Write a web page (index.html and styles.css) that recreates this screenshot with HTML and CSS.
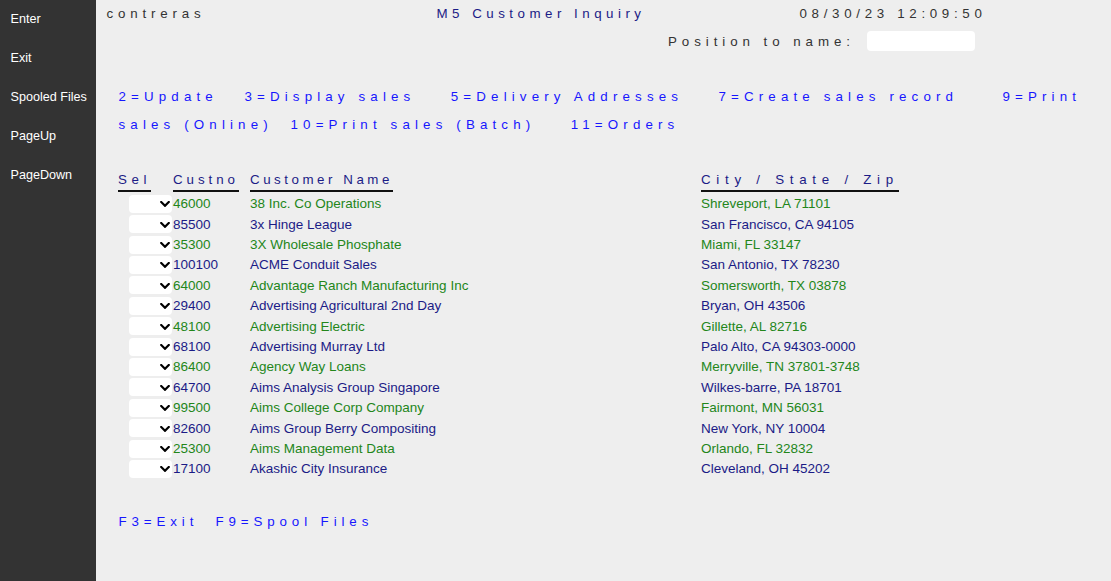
FILE: index.html
```html
<!DOCTYPE html>
<html lang="en">
<head>
<meta charset="utf-8">
<title>M5 Customer Inquiry</title>
<link rel="stylesheet" href="styles.css">
</head>
<body>
<nav class="sidebar">
  <div class="nav-item">Enter</div>
  <div class="nav-item">Exit</div>
  <div class="nav-item">Spooled Files</div>
  <div class="nav-item">PageUp</div>
  <div class="nav-item">PageDown</div>
</nav>
<main class="screen">
  <div class="top-row">
    <span class="f-user">contreras</span>
    <span class="f-title">M5 Customer Inquiry</span>
    <span class="f-date">08/30/23 12:09:50</span>
  </div>
  <div class="pos-row">
    <span class="f-pos">Position to name:</span>
    <input class="pos-input" type="text" aria-label="Position to name">
  </div>
  <div class="options">
    <div class="opt-line">2=Update   3=Display sales    5=Delivery Addresses    7=Create sales record     9=Print</div>
    <div class="opt-line opt-line2">sales (Online)  10=Print sales (Batch)    11=Orders</div>
  </div>
  <div class="grid">
    <div class="head-row">
      <div class="c-sel"><span class="hdr h-sel">Sel</span></div>
      <div class="c-no"><span class="hdr h-no">Custno</span></div>
      <div class="c-name"><span class="hdr h-name">Customer Name</span></div>
      <div class="c-city"><span class="hdr h-city">City / State / Zip</span></div>
    </div>
    <div class="row green"><div class="c-sel"><span class="sel-wrap"><select class="sel" aria-label="Sel"><option></option></select><svg class="chev" viewBox="0 0 10 6" width="10" height="6"><polyline points="1.2,1 5,4.8 8.8,1"/></svg></span></div><div class="c-no">46000</div><div class="c-name">38 Inc. Co Operations</div><div class="c-city">Shreveport, LA 71101</div></div>
    <div class="row navy"><div class="c-sel"><span class="sel-wrap"><select class="sel" aria-label="Sel"><option></option></select><svg class="chev" viewBox="0 0 10 6" width="10" height="6"><polyline points="1.2,1 5,4.8 8.8,1"/></svg></span></div><div class="c-no">85500</div><div class="c-name">3x Hinge League</div><div class="c-city">San Francisco, CA 94105</div></div>
    <div class="row green"><div class="c-sel"><span class="sel-wrap"><select class="sel" aria-label="Sel"><option></option></select><svg class="chev" viewBox="0 0 10 6" width="10" height="6"><polyline points="1.2,1 5,4.8 8.8,1"/></svg></span></div><div class="c-no">35300</div><div class="c-name">3X Wholesale Phosphate</div><div class="c-city">Miami, FL 33147</div></div>
    <div class="row navy"><div class="c-sel"><span class="sel-wrap"><select class="sel" aria-label="Sel"><option></option></select><svg class="chev" viewBox="0 0 10 6" width="10" height="6"><polyline points="1.2,1 5,4.8 8.8,1"/></svg></span></div><div class="c-no">100100</div><div class="c-name">ACME Conduit Sales</div><div class="c-city">San Antonio, TX 78230</div></div>
    <div class="row green"><div class="c-sel"><span class="sel-wrap"><select class="sel" aria-label="Sel"><option></option></select><svg class="chev" viewBox="0 0 10 6" width="10" height="6"><polyline points="1.2,1 5,4.8 8.8,1"/></svg></span></div><div class="c-no">64000</div><div class="c-name">Advantage Ranch Manufacturing Inc</div><div class="c-city">Somersworth, TX 03878</div></div>
    <div class="row navy"><div class="c-sel"><span class="sel-wrap"><select class="sel" aria-label="Sel"><option></option></select><svg class="chev" viewBox="0 0 10 6" width="10" height="6"><polyline points="1.2,1 5,4.8 8.8,1"/></svg></span></div><div class="c-no">29400</div><div class="c-name">Advertising Agricultural 2nd Day</div><div class="c-city">Bryan, OH 43506</div></div>
    <div class="row green"><div class="c-sel"><span class="sel-wrap"><select class="sel" aria-label="Sel"><option></option></select><svg class="chev" viewBox="0 0 10 6" width="10" height="6"><polyline points="1.2,1 5,4.8 8.8,1"/></svg></span></div><div class="c-no">48100</div><div class="c-name">Advertising Electric</div><div class="c-city">Gillette, AL 82716</div></div>
    <div class="row navy"><div class="c-sel"><span class="sel-wrap"><select class="sel" aria-label="Sel"><option></option></select><svg class="chev" viewBox="0 0 10 6" width="10" height="6"><polyline points="1.2,1 5,4.8 8.8,1"/></svg></span></div><div class="c-no">68100</div><div class="c-name">Advertising Murray Ltd</div><div class="c-city">Palo Alto, CA 94303-0000</div></div>
    <div class="row green"><div class="c-sel"><span class="sel-wrap"><select class="sel" aria-label="Sel"><option></option></select><svg class="chev" viewBox="0 0 10 6" width="10" height="6"><polyline points="1.2,1 5,4.8 8.8,1"/></svg></span></div><div class="c-no">86400</div><div class="c-name">Agency Way Loans</div><div class="c-city">Merryville, TN 37801-3748</div></div>
    <div class="row navy"><div class="c-sel"><span class="sel-wrap"><select class="sel" aria-label="Sel"><option></option></select><svg class="chev" viewBox="0 0 10 6" width="10" height="6"><polyline points="1.2,1 5,4.8 8.8,1"/></svg></span></div><div class="c-no">64700</div><div class="c-name">Aims Analysis Group Singapore</div><div class="c-city">Wilkes-barre, PA 18701</div></div>
    <div class="row green"><div class="c-sel"><span class="sel-wrap"><select class="sel" aria-label="Sel"><option></option></select><svg class="chev" viewBox="0 0 10 6" width="10" height="6"><polyline points="1.2,1 5,4.8 8.8,1"/></svg></span></div><div class="c-no">99500</div><div class="c-name">Aims College Corp Company</div><div class="c-city">Fairmont, MN 56031</div></div>
    <div class="row navy"><div class="c-sel"><span class="sel-wrap"><select class="sel" aria-label="Sel"><option></option></select><svg class="chev" viewBox="0 0 10 6" width="10" height="6"><polyline points="1.2,1 5,4.8 8.8,1"/></svg></span></div><div class="c-no">82600</div><div class="c-name">Aims Group Berry Compositing</div><div class="c-city">New York, NY 10004</div></div>
    <div class="row green"><div class="c-sel"><span class="sel-wrap"><select class="sel" aria-label="Sel"><option></option></select><svg class="chev" viewBox="0 0 10 6" width="10" height="6"><polyline points="1.2,1 5,4.8 8.8,1"/></svg></span></div><div class="c-no">25300</div><div class="c-name">Aims Management Data</div><div class="c-city">Orlando, FL 32832</div></div>
    <div class="row navy"><div class="c-sel"><span class="sel-wrap"><select class="sel" aria-label="Sel"><option></option></select><svg class="chev" viewBox="0 0 10 6" width="10" height="6"><polyline points="1.2,1 5,4.8 8.8,1"/></svg></span></div><div class="c-no">17100</div><div class="c-name">Akashic City Insurance</div><div class="c-city">Cleveland, OH 45202</div></div>
  </div>
  <div class="footer">F3=Exit  F9=Spool Files</div>
</main>
</body>
</html>
```
FILE: styles.css
```css
* { box-sizing: border-box; }
html, body { margin: 0; height: 100%; }
body {
  display: flex;
  background: #eeeeee;
  font-family: "Liberation Sans", Arial, sans-serif;
  font-size: 10pt;
  line-height: 15px;
  overflow: hidden;
}
.sidebar {
  width: 96px;
  flex: none;
  background: #333333;
  height: 581px;
}
.nav-item {
  height: 39px;
  display: flex;
  align-items: center;
  padding-left: 10.5px;
  color: #ffffff;
  font-size: 12.6px;
  white-space: nowrap;
}
.screen {
  flex: 1;
  padding-top: 6px;
}
.top-row {
  display: flex;
  height: 15px;
  padding-left: 10.5px;
  color: #333333;
}
.top-row span { white-space: pre; }
.f-user { width: 330px; flex: none; letter-spacing: 4.83px; }
.f-title { width: 363px; flex: none; letter-spacing: 4.49px; color: #1b1b86; }
.f-date { flex: none; letter-spacing: 4.68px; }
.pos-row {
  display: flex;
  align-items: flex-start;
  margin-top: 10px;
  height: 20px;
  padding-left: 572px;
}
.f-pos {
  width: 199px;
  flex: none;
  margin-top: 3px;
  color: #333333;
  letter-spacing: 4.94px;
  white-space: pre;
}
.pos-input {
  width: 108px;
  height: 20px;
  border: none;
  border-radius: 4px;
  background: #ffffff;
  padding: 0;
  margin: 0;
  flex: none;
}
.options {
  margin-top: 38px;
  padding-left: 22.5px;
  color: #1616ff;
  letter-spacing: 5.15px;
}
.opt-line { height: 15px; white-space: pre; }
.opt-line2 { margin-top: 13px; }
.grid {
  margin-top: 40px;
  padding-left: 22px;
}
.head-row {
  display: flex;
  color: #1b1b86;
  margin-bottom: 2px;
}
.hdr {
  display: inline-block;
  padding-bottom: 2.5px;
  border-bottom: 2px solid #111111;
  white-space: pre;
}
.h-sel { letter-spacing: 4.58px; }
.h-no { letter-spacing: 3.96px; }
.h-name { letter-spacing: 3.53px; }
.h-city { letter-spacing: 5.73px; }
.c-sel { width: 55px; flex: none; }
.c-no { width: 77px; flex: none; white-space: nowrap; }
.c-name { width: 451px; flex: none; white-space: nowrap; }
.c-city { flex: none; white-space: nowrap; }
.row {
  display: flex;
  align-items: center;
  height: 20.42px;
  font-size: 13.5px;
}
.row .c-sel { display: flex; align-items: center; }
.green { color: #23861a; }
.navy { color: #1b1b86; }
.sel-wrap {
  position: relative;
  display: block;
  margin-left: 11px;
  width: 43px;
  height: 18px;
}
.sel {
  appearance: none;
  -webkit-appearance: none;
  display: block;
  width: 43px;
  height: 18px;
  border: none;
  border-radius: 4px;
  background: #ffffff;
  padding: 0;
  margin: 0;
}
.chev {
  position: absolute;
  right: 2px;
  top: 6.5px;
  fill: none;
  stroke: #000000;
  stroke-width: 2.2;
  stroke-linecap: square;
  pointer-events: none;
}
.footer {
  margin-top: 34.5px;
  padding-left: 22.5px;
  color: #1616ff;
  letter-spacing: 4.89px;
  height: 15px;
  white-space: pre;
}
```
